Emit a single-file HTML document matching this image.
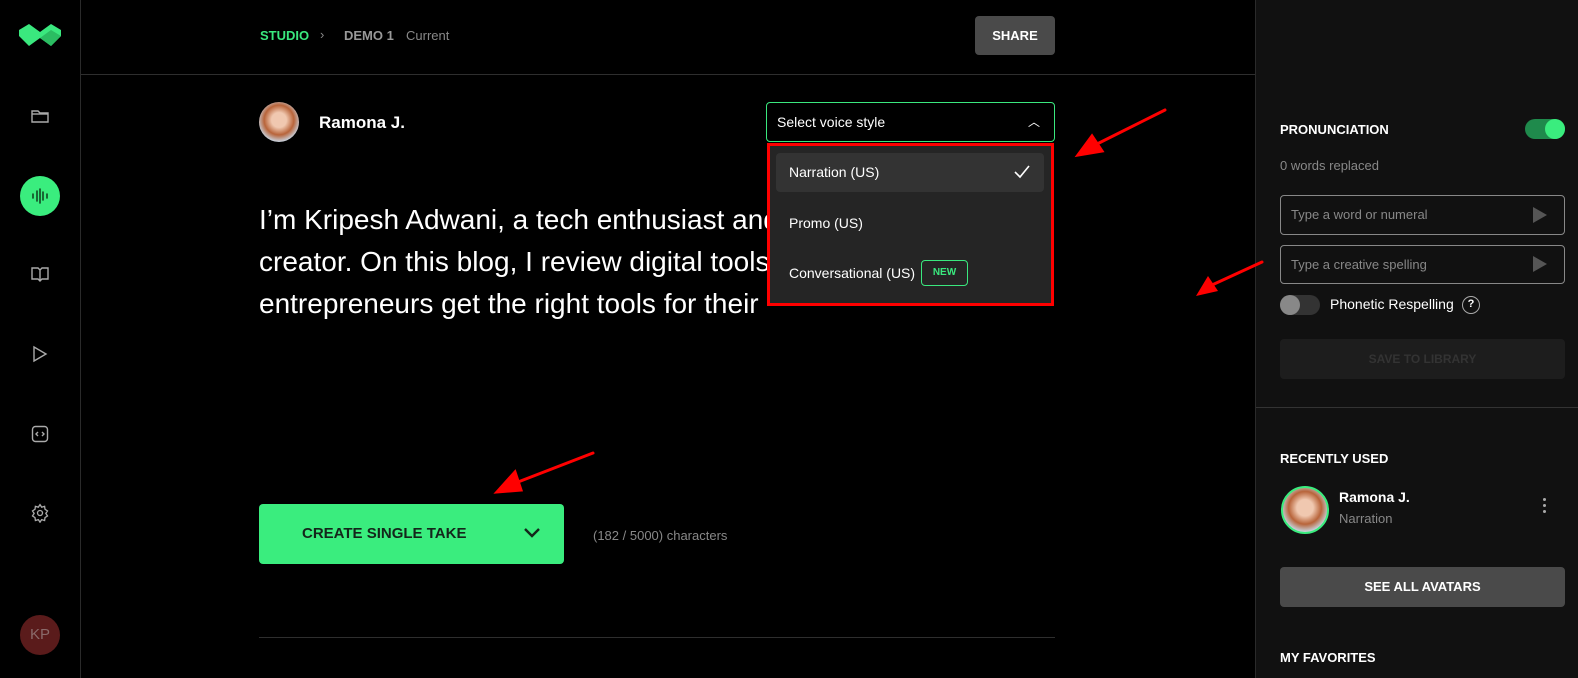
<!DOCTYPE html>
<html><head><meta charset="utf-8"><style>
*{box-sizing:border-box;margin:0;padding:0}
body{width:1578px;height:678px;background:#000;font-family:"Liberation Sans",sans-serif;color:#fff;position:relative;overflow:hidden}
.a{position:absolute}
.ic{position:absolute;left:30px;width:20px;height:20px}
</style></head><body>
<!-- sidebar -->
<div class="a" style="left:80px;top:0;width:1px;height:678px;background:#2a2a2a"></div>
<svg class="a" style="left:19px;top:24px" width="42" height="24" viewBox="0 0 42 24"><path d="M0 6 L10 0 L21 8 L32 0 L42 6 L42 12 L32 22 L21 14 L10 22 L0 12Z" fill="#3ae87e"/><path d="M21 14 L32 6 L42 12 L32 22Z" fill="#2bbd62"/></svg>
<svg class="ic" style="top:106px" viewBox="0 0 20 20" fill="none" stroke="#aaa" stroke-width="1.4"><path d="M2 5h6l2 2h8v9H2z"/><path d="M2 8h16"/></svg>
<div class="a" style="left:20px;top:176px;width:40px;height:40px;border-radius:50%;background:#3aed7e"></div>
<svg class="a" style="left:30px;top:186px" width="20" height="20" viewBox="0 0 20 20" stroke-width="1.6" stroke-linecap="round"><path d="M3 8v4M7 5v10M10 3v14M13 6v8M17 8v4" stroke="#114422"/></svg>
<svg class="ic" style="top:264px" viewBox="0 0 20 20" fill="none" stroke="#aaa" stroke-width="1.4"><path d="M2 4h6l2 2 2-2h6v11h-6l-2 2-2-2H2z M10 6v11"/></svg>
<svg class="ic" style="top:344px" viewBox="0 0 20 20" fill="none" stroke="#aaa" stroke-width="1.4"><path d="M4 3l12 7-12 7z"/></svg>
<svg class="ic" style="top:424px" viewBox="0 0 20 20" fill="none" stroke="#aaa" stroke-width="1.4"><rect x="2.5" y="2.5" width="15" height="15" rx="3"/><path d="M8 8l-2 2 2 2M12 8l2 2-2 2"/></svg>
<svg class="ic" style="top:503px" viewBox="0 0 24 24" fill="none" stroke="#aaa" stroke-width="1.6"><circle cx="12" cy="12" r="3"/><path d="M12 2l2 3 3.5-1 .5 3.5 3 2-2 3 2 3-3 2-.5 3.5-3.5-1-2 3-2-3-3.5 1-.5-3.5-3-2 2-3-2-3 3-2 .5-3.5 3.5 1z"/></svg>
<div class="a" style="left:20px;top:615px;width:40px;height:40px;border-radius:50%;background:#5a1b1b;color:#8a6a6a;font-size:15px;text-align:center;line-height:40px">KP</div>
<!-- header -->
<div class="a" style="left:81px;top:74px;width:1174px;height:1px;background:#2e2e2e"></div>
<div class="a" style="left:260px;top:28px;font-size:13px;font-weight:bold;color:#3ae87e">STUDIO</div>
<div class="a" style="left:320px;top:27px;font-size:13px;color:#888">›</div>
<div class="a" style="left:344px;top:28px;font-size:13px;font-weight:bold;color:#999">DEMO 1</div>
<div class="a" style="left:406px;top:28px;font-size:13px;color:#888">Current</div>
<div class="a" style="left:975px;top:16px;width:80px;height:39px;background:#4a4a4a;border-radius:4px;font-size:13px;font-weight:bold;text-align:center;line-height:39px">SHARE</div>
<!-- voice -->
<div class="a" style="left:259px;top:102px;width:40px;height:40px;border-radius:50%;background:radial-gradient(circle at 50% 45%,#f0c8b0 25%,#b8643a 50%,#c7cdd6 72%)"></div>
<div class="a" style="left:319px;top:113px;font-size:17px;font-weight:bold">Ramona J.</div>
<div class="a" style="left:259px;top:199px;font-size:28px;line-height:42px;color:#fff;width:560px;white-space:nowrap">I’m Kripesh Adwani, a tech enthusiast and<br>creator. On this blog, I review digital tools<br>entrepreneurs get the right tools for their</div>
<div class="a" style="left:766px;top:102px;width:289px;height:40px;border:1px solid #3ae87e;border-radius:4px;background:#000;font-size:14px;line-height:38px;padding-left:10px">Select voice style<span style="position:absolute;right:14px;top:0;font-size:12px">︿</span></div>
<div class="a" style="left:767px;top:143px;width:287px;height:163px;background:#252525;border:3px solid #f00"></div>
<div class="a" style="left:776px;top:153px;width:268px;height:39px;background:#333;border-radius:4px"></div>
<div class="a" style="left:789px;top:164px;font-size:14px">Narration (US)</div>
<svg class="a" style="left:1013px;top:164px" width="18" height="16" viewBox="0 0 18 16" fill="none" stroke="#fff" stroke-width="1.6"><path d="M2 8l5 5 9-11"/></svg>
<div class="a" style="left:789px;top:215px;font-size:14px">Promo (US)</div>
<div class="a" style="left:789px;top:265px;font-size:14px">Conversational (US)</div>
<div class="a" style="left:921px;top:260px;width:47px;height:26px;border:1px solid #3ae87e;border-radius:4px;color:#3ae87e;font-size:10px;font-weight:bold;text-align:center;line-height:24px">NEW</div>
<!-- button -->
<div class="a" style="left:259px;top:504px;width:305px;height:60px;background:#3aed7e;border-radius:4px;font-size:15px;font-weight:bold;line-height:60px;padding-left:43px;color:#14261b">CREATE SINGLE TAKE</div>
<svg class="a" style="left:523px;top:527px" width="18" height="12" viewBox="0 0 18 12" fill="none" stroke="#14261b" stroke-width="2.4"><path d="M2 2l7 7 7-7"/></svg>
<div class="a" style="left:593px;top:528px;font-size:13px;color:#888">(182 / 5000) characters</div>
<div class="a" style="left:259px;top:637px;width:796px;height:1px;background:#2e2e2e"></div>
<!-- right panel -->
<div class="a" style="left:1255px;top:0;width:323px;height:678px;background:#111;border-left:1px solid #2a2a2a"></div>
<div class="a" style="left:1280px;top:122px;font-size:13px;font-weight:bold">PRONUNCIATION</div>
<div class="a" style="left:1525px;top:119px;width:40px;height:20px;border-radius:10px;background:#1f8a4c"></div>
<div class="a" style="left:1545px;top:119px;width:20px;height:20px;border-radius:50%;background:#3aed7e"></div>
<div class="a" style="left:1280px;top:158px;font-size:13px;color:#888">0 words replaced</div>
<div class="a" style="left:1280px;top:195px;width:285px;height:40px;border:1px solid #888;border-radius:4px;font-size:13px;color:#888;line-height:38px;padding-left:10px">Type a word or numeral</div>
<div class="a" style="left:1280px;top:245px;width:285px;height:39px;border:1px solid #888;border-radius:4px;font-size:13px;color:#888;line-height:37px;padding-left:10px">Type a creative spelling</div>
<svg class="a" style="left:1533px;top:207px" width="14" height="16"><path d="M0 0L14 8 0 16z" fill="#555"/></svg>
<svg class="a" style="left:1533px;top:256px" width="14" height="16"><path d="M0 0L14 8 0 16z" fill="#555"/></svg>
<div class="a" style="left:1280px;top:295px;width:40px;height:20px;border-radius:10px;background:#333"></div>
<div class="a" style="left:1280px;top:295px;width:20px;height:20px;border-radius:50%;background:#888"></div>
<div class="a" style="left:1330px;top:296px;font-size:14px">Phonetic Respelling</div>
<div class="a" style="left:1462px;top:296px;width:18px;height:18px;border:1.5px solid #aaa;border-radius:50%;font-size:11px;text-align:center;line-height:15px;font-weight:bold">?</div>
<div class="a" style="left:1280px;top:339px;width:285px;height:40px;background:#1d1d1d;border-radius:4px;font-size:12px;font-weight:bold;color:#333;text-align:center;line-height:40px">SAVE TO LIBRARY</div>
<div class="a" style="left:1256px;top:407px;width:322px;height:1px;background:#333"></div>
<div class="a" style="left:1280px;top:451px;font-size:13px;font-weight:bold">RECENTLY USED</div>
<div class="a" style="left:1281px;top:486px;width:48px;height:48px;border-radius:50%;border:2px solid #3aed7e;background:radial-gradient(circle at 50% 45%,#f0c8b0 25%,#b8643a 50%,#c7cdd6 72%)"></div>
<div class="a" style="left:1339px;top:489px;font-size:14px;font-weight:bold">Ramona J.</div>
<div class="a" style="left:1339px;top:511px;font-size:13px;color:#888">Narration</div>
<div class="a" style="left:1543px;top:498px;width:3px;height:3px;background:#aaa;border-radius:50%;box-shadow:0 6px #aaa,0 12px #aaa"></div>
<div class="a" style="left:1280px;top:567px;width:285px;height:40px;background:#4a4a4a;border-radius:4px;font-size:13px;font-weight:bold;text-align:center;line-height:40px">SEE ALL AVATARS</div>
<div class="a" style="left:1280px;top:650px;font-size:13px;font-weight:bold">MY FAVORITES</div>
<!-- arrows -->
<svg class="a" style="left:0;top:0" width="1578" height="678">
<g stroke="#f00" stroke-width="3" fill="#f00" stroke-linecap="round">
<line x1="1165" y1="110" x2="1095" y2="145"/><path d="M1078 155L1092 136 1102 151Z"/>
<line x1="1262" y1="262" x2="1212" y2="285"/><path d="M1196 296L1208 276 1218 291Z" stroke="none"/>
<line x1="593" y1="453" x2="518" y2="482"/><path d="M497 492L515 472 521 490Z"/>
</g></svg>
</body></html>
